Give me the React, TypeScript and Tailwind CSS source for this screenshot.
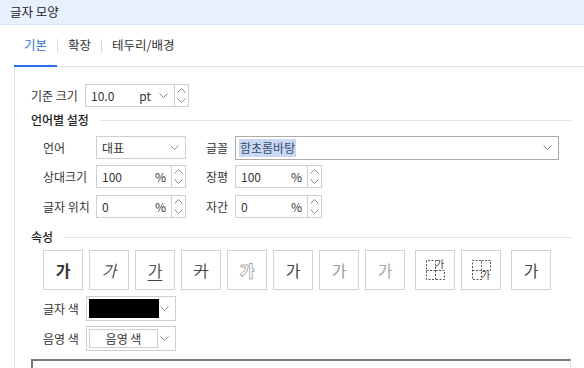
const font = "font-['Noto_Sans_CJK_KR','Noto_Sans',sans-serif]";

function ChevronDown({ className = "" }: { className?: string }) {
  return (
    <svg width="9" height="5" viewBox="0 0 9 5" className={className}>
      <path d="M0.5 0.5 L4.5 4.5 L8.5 0.5" fill="none" stroke="#8a8a8a" strokeWidth="1" />
    </svg>
  );
}

function ChevronUp() {
  return (
    <svg width="9" height="5" viewBox="0 0 9 5">
      <path d="M0.5 4.5 L4.5 0.5 L8.5 4.5" fill="none" stroke="#8a8a8a" strokeWidth="1" />
    </svg>
  );
}

function Spinner() {
  return (
    <div className="flex h-full w-[14px] flex-col items-center justify-between border-y border-r border-[#cfcfcf] py-[3px]">
      <ChevronUp />
      <ChevronDown />
    </div>
  );
}

function NumberField({ value, unit, width }: { value: string; unit: string; width: string }) {
  return (
    <div className="flex h-[23px] items-center">
      <div className={`flex h-full items-center justify-between border border-[#cfcfcf] pl-[5px] pr-[5px] ${width}`}>
        <span>{value}</span>
        <span>{unit}</span>
      </div>
      <Spinner />
    </div>
  );
}

function SectionTitle({ title, gap }: { title: string; gap: string }) {
  return (
    <div className="flex h-[16px] items-center">
      <span className="font-medium text-[#222]">{title}</span>
      <div className={`h-px flex-1 bg-[#e2e2e2] ${gap}`} />
    </div>
  );
}

// dashed 2x2 grid with one quadrant left open for the small 가
function GridIcon({ sub }: { sub?: boolean }) {
  const d = sub
    ? "M9.5 10.5 V0.5 H0.5 V19.5 H9.5 V10.5 H0.5 M9.5 0.5 H18.5 V10.5 H9.5"
    : "M9.5 10.5 V19.5 H0.5 V0.5 H9.5 V10.5 H0.5 M9.5 10.5 H18.5 V19.5 H9.5";
  return (
    <svg width="19" height="20" viewBox="0 0 19 20">
      <path d={d} fill="none" stroke="#555" strokeWidth="1" strokeDasharray="2 1.5" />
    </svg>
  );
}

const btn = "flex h-[40px] w-[40px] items-center justify-center border border-[#d2d2d2] bg-white text-[16px]";

export default function App() {
  return (
    <div className={`h-[368px] w-[584px] overflow-hidden bg-white text-[12px] text-[#333] ${font}`}>
      <div className="flex h-[25px] items-center border-b border-[#d6e2f8] bg-[#e9f0fd] px-[10px] text-[12.5px] text-[#222]">
        글자 모양
      </div>

      <div className="ml-[14px] flex h-[42px] items-stretch border-b border-[#e0e0e0] text-[12.5px]">
        <div className="-mb-px flex items-center border-b-2 border-[#2a72e6] px-[10px] text-[#2f6fd9]">기본</div>
        <div className="my-auto h-[14px] w-px bg-[#dadada]" />
        <div className="flex items-center px-[10px]">확장</div>
        <div className="my-auto h-[14px] w-px bg-[#dadada]" />
        <div className="flex items-center px-[10px]">테두리/배경</div>
      </div>

      <div className="ml-[14px] h-[400px] border-l border-[#e3e3e3] pl-[16px] pr-[13px] pt-[17px]">
        <div className="flex h-[23px] items-center">
          <span className="w-[54px]">기준 크기</span>
          <div className="flex h-full items-center">
            <div className="flex h-full w-[90px] items-center border border-[#cfcfcf] pl-[5px] pr-[6px]">
              <span className="flex-1">10.0</span>
              <span className="mr-[8px]">pt</span>
              <ChevronDown />
            </div>
            <Spinner />
          </div>
        </div>

        <div className="mt-[5px]">
          <SectionTitle title="언어별 설정" gap="ml-[11px]" />
        </div>

        <div className="pl-[12px]">
          <div className="mt-[8px] flex h-[23px] items-center">
            <span className="w-[53px]">언어</span>
            <div className="flex h-full w-[90px] items-center justify-between border border-[#cfcfcf] pl-[5px] pr-[6px]">
              <span>대표</span>
              <ChevronDown />
            </div>
            <span className="ml-[20px] w-[29px]">글꼴</span>
            <div className="flex h-[24px] w-[324px] items-center justify-between border border-[#ababab] pl-[3px] pr-[6px]">
              <span className="bg-[#c9d8f4] px-[1px] text-[#3a4a6a]">함초롬바탕</span>
              <ChevronDown />
            </div>
          </div>

          <div className="mt-[6px] flex h-[23px] items-center">
            <span className="w-[53px]">상대크기</span>
            <NumberField value="100" unit="%" width="w-[76px]" />
            <span className="ml-[20px] w-[29px]">장평</span>
            <NumberField value="100" unit="%" width="w-[73px]" />
          </div>

          <div className="mt-[7px] flex h-[23px] items-center">
            <span className="w-[53px]">글자 위치</span>
            <NumberField value="0" unit="%" width="w-[76px]" />
            <span className="ml-[20px] w-[29px]">자간</span>
            <NumberField value="0" unit="%" width="w-[73px]" />
          </div>
        </div>

        <div className="mt-[11px]">
          <SectionTitle title="속성" gap="ml-[10px]" />
        </div>

        <div className="pl-[12px]">
          <div className="mt-[5px] flex gap-[6px]">
            <div className={`${btn} font-bold text-[#333]`}>가</div>
            <div className={`${btn} italic text-[#555]`}>가</div>
            <div className={`${btn} text-[#555] underline decoration-[#444] underline-offset-[3px]`}>가</div>
            <div className={`${btn} text-[#555] line-through decoration-[#444]`}>가</div>
            <div className={`${btn} font-black text-white [-webkit-text-stroke:0.5px_#666]`}>가</div>
            <div className={`${btn} text-[#444]`}>가</div>
            <div className={`${btn} text-[#9a9a9a]`}>가</div>
            <div className={`${btn} text-[#a8a8a8]`}>가</div>
            <div className={`${btn} relative ml-[4px]`}>
              <GridIcon />
              <span className="absolute left-[19px] top-[8px] text-[10px] leading-none text-[#444]">가</span>
            </div>
            <div className={`${btn} relative`}>
              <GridIcon sub />
              <span className="absolute left-[19px] top-[19px] text-[10px] leading-none text-[#444]">가</span>
            </div>
            <div className={`${btn} ml-[4px] text-[#444]`}>가</div>
          </div>

          <div className="mt-[6px] flex h-[25px] items-center">
            <span className="w-[43px]">글자 색</span>
            <div className="flex h-full w-[90px] items-center border border-[#cfcfcf] py-[2px] pl-[2px] pr-[6px]">
              <div className="h-full w-[70px] bg-black" />
              <div className="flex flex-1 justify-end">
                <ChevronDown />
              </div>
            </div>
          </div>

          <div className="mt-[5px] flex h-[25px] items-center">
            <span className="w-[43px]">음영 색</span>
            <div className="flex h-full w-[90px] items-center border border-[#cfcfcf] py-[2px] pl-[2px] pr-[6px]">
              <div className="flex h-full w-[69px] items-center justify-center border border-[#cfcfcf]">음영 색</div>
              <div className="flex flex-1 justify-end">
                <ChevronDown />
              </div>
            </div>
          </div>
        </div>

        <div className="mt-[8px] h-[40px] w-[540px] border-l-2 border-r border-t-2 border-l-[#777] border-r-[#ddd] border-t-[#777]" />
      </div>
    </div>
  );
}
